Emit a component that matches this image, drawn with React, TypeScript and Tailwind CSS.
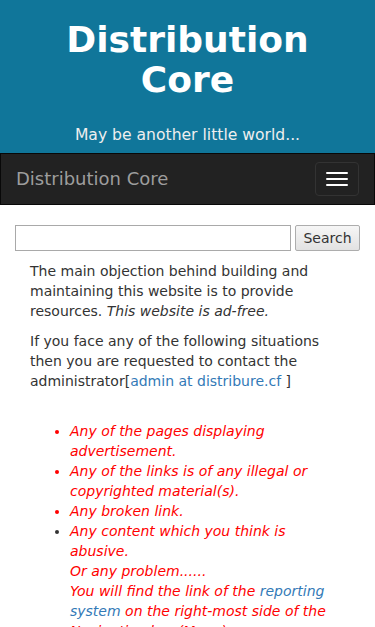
export default function App() {
  return (
    <div className="min-h-[627px] bg-white font-['DejaVu_Sans',sans-serif] text-[14px] leading-[20px] text-[#333]">
      <header className="bg-[#10769a] px-[15px] pt-[20px] pb-[7px] text-center">
        <h1 className="text-[36px] font-bold leading-[1.1] text-white">Distribution Core</h1>
        <p className="mt-[25px] text-[15.6px] leading-[22px] text-[#eee]">May be another little world...</p>
      </header>

      <nav className="flex h-[52px] items-center justify-between border border-[#080808] bg-[#222]">
        <a className="pl-[15px] text-[18px] leading-[20px] text-[#9d9d9d]" href="#">
          Distribution Core
        </a>
        <button className="mr-[15px] flex h-[34px] w-[44px] flex-col items-center justify-center gap-[4px] rounded-[4px] border border-[#333]">
          <span className="block h-[2px] w-[22px] rounded-[1px] bg-white" />
          <span className="block h-[2px] w-[22px] rounded-[1px] bg-white" />
          <span className="block h-[2px] w-[22px] rounded-[1px] bg-white" />
        </button>
      </nav>

      <form className="mt-[20px] flex gap-[4px] px-[15px]">
        <input type="text" className="h-[26px] w-[276px] border border-[#a9a9a9] bg-white px-[4px]" />
        <button
          type="button"
          className="h-[26px] w-[65px] rounded-[2px] border border-[#adadad] bg-gradient-to-b from-[#f6f6f6] to-[#e2e2e2] text-[14px] text-[#333]"
        >
          Search
        </button>
      </form>

      <div className="px-[30px] pt-[10px]">
        <p className="mb-[10px]">
          The main objection behind building and maintaining this website is to provide resources.{" "}
          <em>This website is ad-free.</em>
        </p>
        <p className="mb-[10px]">
          If you face any of the following situations then you are requested to contact the administrator[
          <a href="#" className="text-[#337ab7]">
            admin at distribure.cf
          </a>{" "}
          ]
        </p>
        <br />
        <ul className="list-disc pl-[40px] italic">
          <li className="text-[#f00]">Any of the pages displaying advertisement.</li>
          <li className="text-[#f00]">Any of the links is of any illegal or copyrighted material(s).</li>
          <li className="text-[#f00]">Any broken link.</li>
          <li className="text-[#333]">
            <span className="text-[#f00]">
              Any content which you think is abusive.
              <br />
              Or any problem......
              <br />
              You will find the link of the{" "}
              <a href="#" className="text-[#337ab7]">
                reporting system
              </a>{" "}
              on the right-most side of the Navigation bar (Menu).
            </span>
          </li>
        </ul>
      </div>
    </div>
  );
}
